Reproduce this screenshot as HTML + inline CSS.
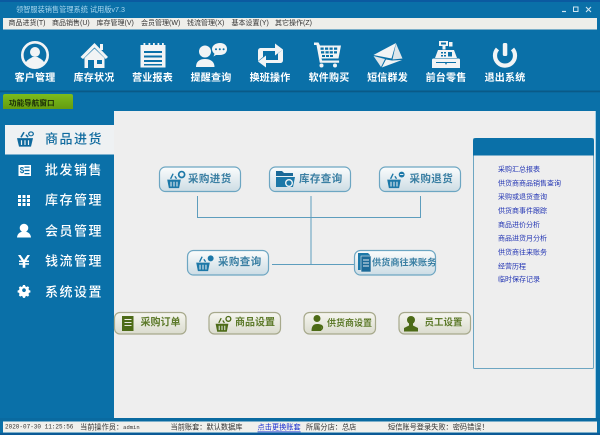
<!DOCTYPE html>
<html><head><meta charset="utf-8"><style>
html,body{margin:0;padding:0;background:#0a70a8;width:600px;height:435px;overflow:hidden}
svg{display:block;filter:blur(.3px)}
text{font-family:"Liberation Sans","Noto Sans CJK SC",sans-serif;dominant-baseline:central}
.t{font-size:10px;font-weight:700;fill:#fff;text-anchor:middle;letter-spacing:.2px}
.m{font-size:7px;fill:#333}
.s{font-size:13px;font-weight:500;fill:#fff;letter-spacing:1.5px}
.b{font-size:10.5px;font-weight:700;fill:#3a7f a3;letter-spacing:.4px}
.g{font-size:10px;font-weight:700;fill:#5d7a2a}
.l{font-size:7px;fill:#2436b4}
.st{font-size:7.2px;fill:#333}
</style></head><body>
<svg width="600" height="435" viewBox="0 0 600 435" xmlns="http://www.w3.org/2000/svg">
<defs>
<linearGradient id="bb" x1="0" y1="0" x2="0" y2="1"><stop offset="0" stop-color="#fbfcfc"/><stop offset="1" stop-color="#ccdce4"/></linearGradient>
<linearGradient id="gb" x1="0" y1="0" x2="0" y2="1"><stop offset="0" stop-color="#f6f6f0"/><stop offset="1" stop-color="#dadbce"/></linearGradient>
<linearGradient id="tab" x1="0" y1="0" x2="0" y2="1"><stop offset="0" stop-color="#7cbc1c"/><stop offset="1" stop-color="#649c10"/></linearGradient>
<g id="bk"><path d="M-8 -1H8L6 9H-6Z" fill="currentColor"/><path d="M-4 -2L-1 -8M3 -2L1 -5" stroke="currentColor" stroke-width="1.600" fill="none"/><path d="M-3.500 1.500V7M0 1.500V7M3.500 1.500V7" stroke="#eef3f5" stroke-width="1.200"/></g>
</defs>
<rect width="600" height="435" fill="#0a70a8"/>
<rect width="600" height="2" fill="#0b5aa0"/>
<text x="16" y="9.500" style="font-size:7.200px;fill:#a8d6ee">领智服装销售管理系统 试用版v7.3</text>
<!-- window buttons -->
<path d="M562 11.500h4" stroke="#cfe6f2" stroke-width="1.200"/><rect x="573.500" y="7" width="4.500" height="4.500" fill="none" stroke="#cfe6f2"/><path d="M586 7l5 5M591 7l-5 5" stroke="#cfe6f2" stroke-width="1.100"/>
<!-- menu -->
<rect x="3" y="18" width="594" height="11.500" fill="#eeeeea"/>
<text class="m" x="8.500" y="23.700">商品进货(T)</text>
<text class="m" x="52" y="23.700">商品销售(U)</text>
<text class="m" x="96.500" y="23.700">库存管理(V)</text>
<text class="m" x="141" y="23.700">会员管理(W)</text>
<text class="m" x="187" y="23.700">钱流管理(X)</text>
<text class="m" x="231.500" y="23.700">基本设置(Y)</text>
<text class="m" x="275" y="23.700">其它操作(Z)</text>

<!-- toolbar icons -->
<g fill="#f2f4f5" stroke="none">
<!-- customer -->
<circle cx="35" cy="55" r="12.700" fill="none" stroke="#f2f4f5" stroke-width="2.600"/>
<circle cx="35" cy="52" r="5"/><path d="M25.500 63.500c1-4 5-5 7-6.500h5c2 1.500 6 2.500 7 6.500c-2.500 2.300-5.500 3.500-9.500 3.500s-7-1.200-9.500-3.500z"/>
<!-- house -->
<path d="M80.500 57L94.500 43L108 57L105.800 59L94.500 47.500L83 59Z"/><rect x="100" y="44" width="3" height="6"/>
<path fill-rule="evenodd" d="M84.500 58L94.500 48.500L104.500 58V68H84.500ZM88 60h6v8h-6ZM97 60v4h5v-4Z"/>
<!-- notebook -->
<path fill-rule="evenodd" d="M140.500 45h25v22.500h-25ZM144 51v2h18v-2ZM144 55.500v2h18v-2ZM144 60v2h18v-2ZM144 64v1.500h18v-1.500Z"/>
<rect x="143.500" y="43" width="1.800" height="4.500"/><rect x="148.500" y="43" width="1.800" height="4.500"/><rect x="153" y="43" width="1.800" height="4.500"/><rect x="157.500" y="43" width="1.800" height="4.500"/><rect x="162" y="43" width="1.800" height="4.500"/>
<!-- person & bubble -->
<circle cx="205" cy="51.500" r="6"/><path d="M196 67c0-5 3-8 9-8s9.500 3 9.500 8Z"/>
<path fill-rule="evenodd" d="M220 43c4.500 0 7 2.500 7 6s-2.500 6-7 6l-4 0-2.500 1.500 1-2.800c-1.600-1-2.500-2.800-2.500-4.700 0-3.500 3.500-6 8-6zM216 48.300a1 1 0 1 0 .01 0zM219.800 48.300a1 1 0 1 0 .01 0zM223.600 48.300a1 1 0 1 0 .01 0z"/>
<!-- swap -->
<path d="M258 61V51c0-2 1-3 3-3h14V43.500l8 6-8 6V51H263V57Z"/>
<path d="M283 49.500v10.500c0 2-1 3-3 3h-14v4.500l-8-6 8-6V60H278V53.500Z"/>
<!-- cart -->
<path d="M314 42.500h4.500l1.500 3h21l-2.500 13h-17l.6 2h17v2.300h-19.300L316.500 45H314Z"/>
<g fill="#0a70a8"><rect x="320.500" y="47.500" width="3.200" height="2.300"/><rect x="325" y="47.500" width="3.200" height="2.300"/><rect x="329.500" y="47.500" width="3.200" height="2.300"/><rect x="334" y="47.500" width="3.200" height="2.300"/><rect x="321" y="51.200" width="3.200" height="2.300"/><rect x="325.500" y="51.200" width="3.200" height="2.300"/><rect x="329.700" y="51.200" width="3.200" height="2.300"/><rect x="334" y="51.200" width="3" height="2.300"/><rect x="322" y="55" width="3" height="2"/><rect x="326" y="55" width="3" height="2"/><rect x="330" y="55" width="3" height="2"/></g>
<circle cx="321.500" cy="65.500" r="2"/><circle cx="335" cy="65.500" r="2"/>
<!-- envelope -->
<path d="M373.500 55L396 43L391.500 58.500Z"/><path d="M396 43.500L402.500 58.500L392.500 59.500Z" fill="#dfe6ea"/><path d="M373.500 56L381 67L385 59Z" fill="#dfe6ea"/><path d="M386 59.500L392 60.500L402 60L381.800 67.500Z"/>
<!-- register -->
<path fill-rule="evenodd" d="M439 41h9v5h-2.500v3.500h-3V46H439ZM441 42.500v2h5v-2Z"/><rect x="449" y="42" width="3.500" height="4.500"/>
<path fill-rule="evenodd" d="M438 50h16l3 8h-22ZM441 52v1.500h2V52ZM444 52v1.500h2V52ZM441 55v1.500h2V55ZM444 55v1.500h2V55ZM448 52v4.500h4V52Z"/>
<path fill-rule="evenodd" d="M432 60c0-1 .5-1.500 1.500-1.500h25c1 0 1.500.5 1.500 1.500v8h-28ZM436 62v1h20v-1ZM445 63.200v1h2v-1Z"/>
<!-- power -->
<path fill="none" stroke="#f2f4f5" stroke-width="4.200" d="M497.500 49A10 10 0 1 0 512.500 49"/><rect x="502.800" y="43" width="4.500" height="13" rx="1.500"/>
</g>
<text class="t" x="35" y="78.500">客户管理</text>
<text class="t" x="94" y="78.500">库存状况</text>
<text class="t" x="152.500" y="78.500">营业报表</text>
<text class="t" x="211" y="78.500">提醒查询</text>
<text class="t" x="270" y="78.500">换班操作</text>
<text class="t" x="329" y="78.500">软件购买</text>
<text class="t" x="387.500" y="78.500">短信群发</text>
<text class="t" x="446" y="78.500">前台零售</text>
<text class="t" x="505" y="78.500">退出系统</text>
<rect x="0" y="90.500" width="600" height="1.800" fill="#0a5a88"/>

<!-- tab -->
<path d="M3 109V96q0-2 2-2H71q2 0 2 2V109Z" fill="url(#tab)"/>
<text x="9" y="103" style="font-size:7.600px;font-weight:700;fill:#1a2a08">功能导航窗口</text>

<!-- content -->
<rect x="114" y="111" width="481.500" height="307" fill="#eeeeee"/>
<rect x="595" y="111" width="1" height="307" fill="#9fd0e8"/>

<!-- sidebar -->
<rect x="5" y="125" width="109" height="29.500" fill="#eef1f3"/>
<g color="#0f6a9e" transform="translate(25,139) scale(1,.85)"><use href="#bk"/><circle cx="6" cy="-6" r="2.300" fill="none" stroke="#0f6a9e" stroke-width="1.300"/></g>
<text class="s" x="45" y="139" style="fill:#0f6a9e">商品进货</text>
<text class="s" x="45" y="170">批发销售</text>
<text class="s" x="45" y="200">库存管理</text>
<text class="s" x="45" y="231">会员管理</text>
<text class="s" x="45" y="261">钱流管理</text>
<text class="s" x="45" y="292">系统设置</text>
<g fill="#fff">
<path fill-rule="evenodd" d="M18.500 165h12.500v11H18.500ZM24.500 166.500v1.300h5V166.500ZM24.500 169.800v1.300h5V169.800ZM24.500 173v1.300h5V173Z"/>
<text x="19.800" y="170.500" style="font-size:8px;font-weight:700;fill:#0a70a8">$</text>
<g><rect x="18" y="195" width="3" height="3"/><rect x="22.500" y="195" width="3" height="3"/><rect x="27" y="195" width="3" height="3"/><rect x="18" y="199" width="3" height="3"/><rect x="22.500" y="199" width="3" height="3"/><rect x="27" y="199" width="3" height="3"/><rect x="18" y="203" width="3" height="3"/><rect x="22.500" y="203" width="3" height="3"/><rect x="27" y="203" width="3" height="3"/></g>
<circle cx="24" cy="228" r="4.300"/><path d="M17 237.500c.3-4 3.200-6 7-6s6.700 2 7 6Z"/>
<path d="M18 255h2.600l3.400 5 3.400-5h2.600l-3.600 5.500h2.600v1.500h-3.700v1.300h3.700v1.500h-3.700v3h-2.600v-3h-3.700v-1.500h3.700V262h-3.700v-1.500h2.600Z"/>
<path fill-rule="evenodd" d="M22.500 285h3l.5 2 1.800.8 1.800-1 2 2-1 1.800.8 1.900 2 .5v2.900l-2 .5-.8 1.800 1 1.800-2 2-1.800-1-1.800.8-.5 2h-3l-.5-2-1.800-.8-1.800 1-2-2 1-1.800-.8-1.800-2-.5v-2.900l2-.5.8-1.900-1-1.800 2-2 1.800 1 1.800-.8ZM24 289.800a2.800 2.800 0 1 0 .01 0Z" transform="translate(24,291.500) scale(.68) translate(-24,-294.500)"/>
</g>

<!-- connector lines -->
<g stroke="#5d9dbd" stroke-width="1" fill="none">
<path d="M197.500 196V217.500H420.500V196"/><path d="M311 196V264.500"/><path d="M272 264.500H354"/>
</g>

<!-- blue buttons -->
<g fill="url(#bb)" stroke="#6da6c2" stroke-width="1.200">
<rect x="159.500" y="167" width="81" height="24.500" rx="6"/>
<rect x="269.500" y="167" width="81" height="24.500" rx="6"/>
<rect x="379.500" y="167" width="81" height="24.500" rx="6"/>
<rect x="187.500" y="250.500" width="81" height="24.500" rx="6"/>
<rect x="354.500" y="250.500" width="81" height="24.500" rx="6"/>
</g>
<g color="#1c78a8">
<g transform="translate(174,180.500) scale(.85)"><use href="#bk"/><circle cx="9" cy="-7" r="3.500" fill="none" stroke="#1c78a8" stroke-width="2"/></g>
<g transform="translate(394,180.500) scale(.85)"><use href="#bk"/><circle cx="9" cy="-7" r="3.500" fill="#1c78a8"/><path d="M7 -7H11" stroke="#fff"/></g>
<g transform="translate(203,263.500) scale(.85)"><use href="#bk"/><circle cx="9" cy="-6" r="3.500" fill="#1c78a8"/></g>
<path d="M276 171h6l2 2h9v3h-17Z" fill="#1c6a98"/><path d="M276 177h19l-2 10h-17Z" fill="#1c78a8"/><circle cx="289" cy="183" r="4" fill="#eef3f5"/><circle cx="289" cy="183" r="2.600" fill="#1c78a8"/>
<path d="M358 253h10l2 2v15h-12Z" fill="#1c78a8"/><rect x="361" y="256" width="10" height="16" fill="#1c6a98" stroke="#e4edf1" stroke-width=".6"/><path d="M363 260h6M363 263h6M363 266h6" stroke="#dfeaf0"/>
</g>
<text class="b" x="188" y="179" style="fill:#3a7fa3">采购进货</text>
<text class="b" x="299" y="179" style="fill:#3a7fa3">库存查询</text>
<text class="b" x="409.500" y="179" style="fill:#3a7fa3">采购退货</text>
<text class="b" x="218" y="262" style="fill:#3a7fa3">采购查询</text>
<text class="b" x="372" y="262.500" style="font-size:9.200px;letter-spacing:0;fill:#3a7fa3">供货商往来账务</text>

<!-- green buttons -->
<g fill="url(#gb)" stroke="#a7a98c" stroke-width="1.200">
<rect x="114.500" y="312.500" width="71.500" height="21.500" rx="5.500"/>
<rect x="209" y="312.500" width="71.500" height="21.500" rx="5.500"/>
<rect x="304" y="312.500" width="71.500" height="21.500" rx="5.500"/>
<rect x="399" y="312.500" width="71.500" height="21.500" rx="5.500"/>
</g>
<path fill="#4d6b17" fill-rule="evenodd" d="M122 316h11.500v15H122ZM124.500 319v1h7v-1ZM124.500 322v1h7v-1ZM124.500 325v1h7v-1Z"/>
<g color="#4d6b17" transform="translate(222,324.500) scale(.8)"><use href="#bk"/><circle cx="8" cy="-7" r="3" fill="none" stroke="#4d6b17" stroke-width="1.700"/></g>
<g fill="#4d6b17"><circle cx="317" cy="318.500" r="3.500"/><path d="M311.500 331c0-5 2-7 5.500-7s4.500 1 5 2.500l-1 4.500Z"/><circle cx="320" cy="327.500" r="2.500" fill="none" stroke="#4d6b17" stroke-width="1.300"/></g>
<g fill="#4d6b17"><circle cx="411" cy="320" r="4"/><path d="M409 323h4v2.500l5 2.500v3.500h-14V328l5-2.500Z"/></g>
<text class="g" x="140.500" y="323">采购订单</text>
<text class="g" x="235" y="323">商品设置</text>
<text class="g" x="327" y="323" style="font-size:9px">供货商设置</text>
<text class="g" x="424.500" y="323" style="font-size:9.500px">员工设置</text>

<!-- right panel -->
<rect x="473.500" y="138.500" width="120" height="230" fill="#eeeeee" stroke="#6da6c2" rx="1"/>
<path d="M473 155.500V141q0-3 3-3H591q3 0 3 3V155.500Z" fill="#0a70a8"/>
<text class="l" x="498" y="170">采购汇总报表</text>
<text class="l" x="498" y="184">供货商商品销售查询</text>
<text class="l" x="498" y="197.500">采购或退货查询</text>
<text class="l" x="498" y="211.500">供货商事件跟踪</text>
<text class="l" x="498" y="225.500">商品进价分析</text>
<text class="l" x="498" y="239">商品进货月分析</text>
<text class="l" x="498" y="253">供货商往来账务</text>
<text class="l" x="498" y="267">经营历程</text>
<text class="l" x="498" y="280">临时保存记录</text>

<!-- status -->
<rect x="0" y="418" width="600" height="3" fill="#0a6aa0"/>
<rect x="3" y="421.500" width="594" height="11" fill="#f0f0ec"/>
<rect x="0" y="433" width="600" height="2" fill="#0b5a96"/>
<text x="5" y="427" style="font-family:'Liberation Mono',monospace;font-size:6px;fill:#333">2020-07-30 11:25:56</text>
<text class="st" x="80" y="427">当前操作员：<tspan style="font-family:'Liberation Mono',monospace;font-size:5.500px">admin</tspan></text>
<text class="st" x="170.500" y="427">当前账套：默认数据库</text>
<text class="st" x="257.500" y="427" style="fill:#1a2fd0;text-decoration:underline">点击更换账套</text>
<text class="st" x="306" y="427">所属分店：总店</text>
<text class="st" x="388" y="427">短信账号登录失败：密码错误！</text>
</svg>
</body></html>
